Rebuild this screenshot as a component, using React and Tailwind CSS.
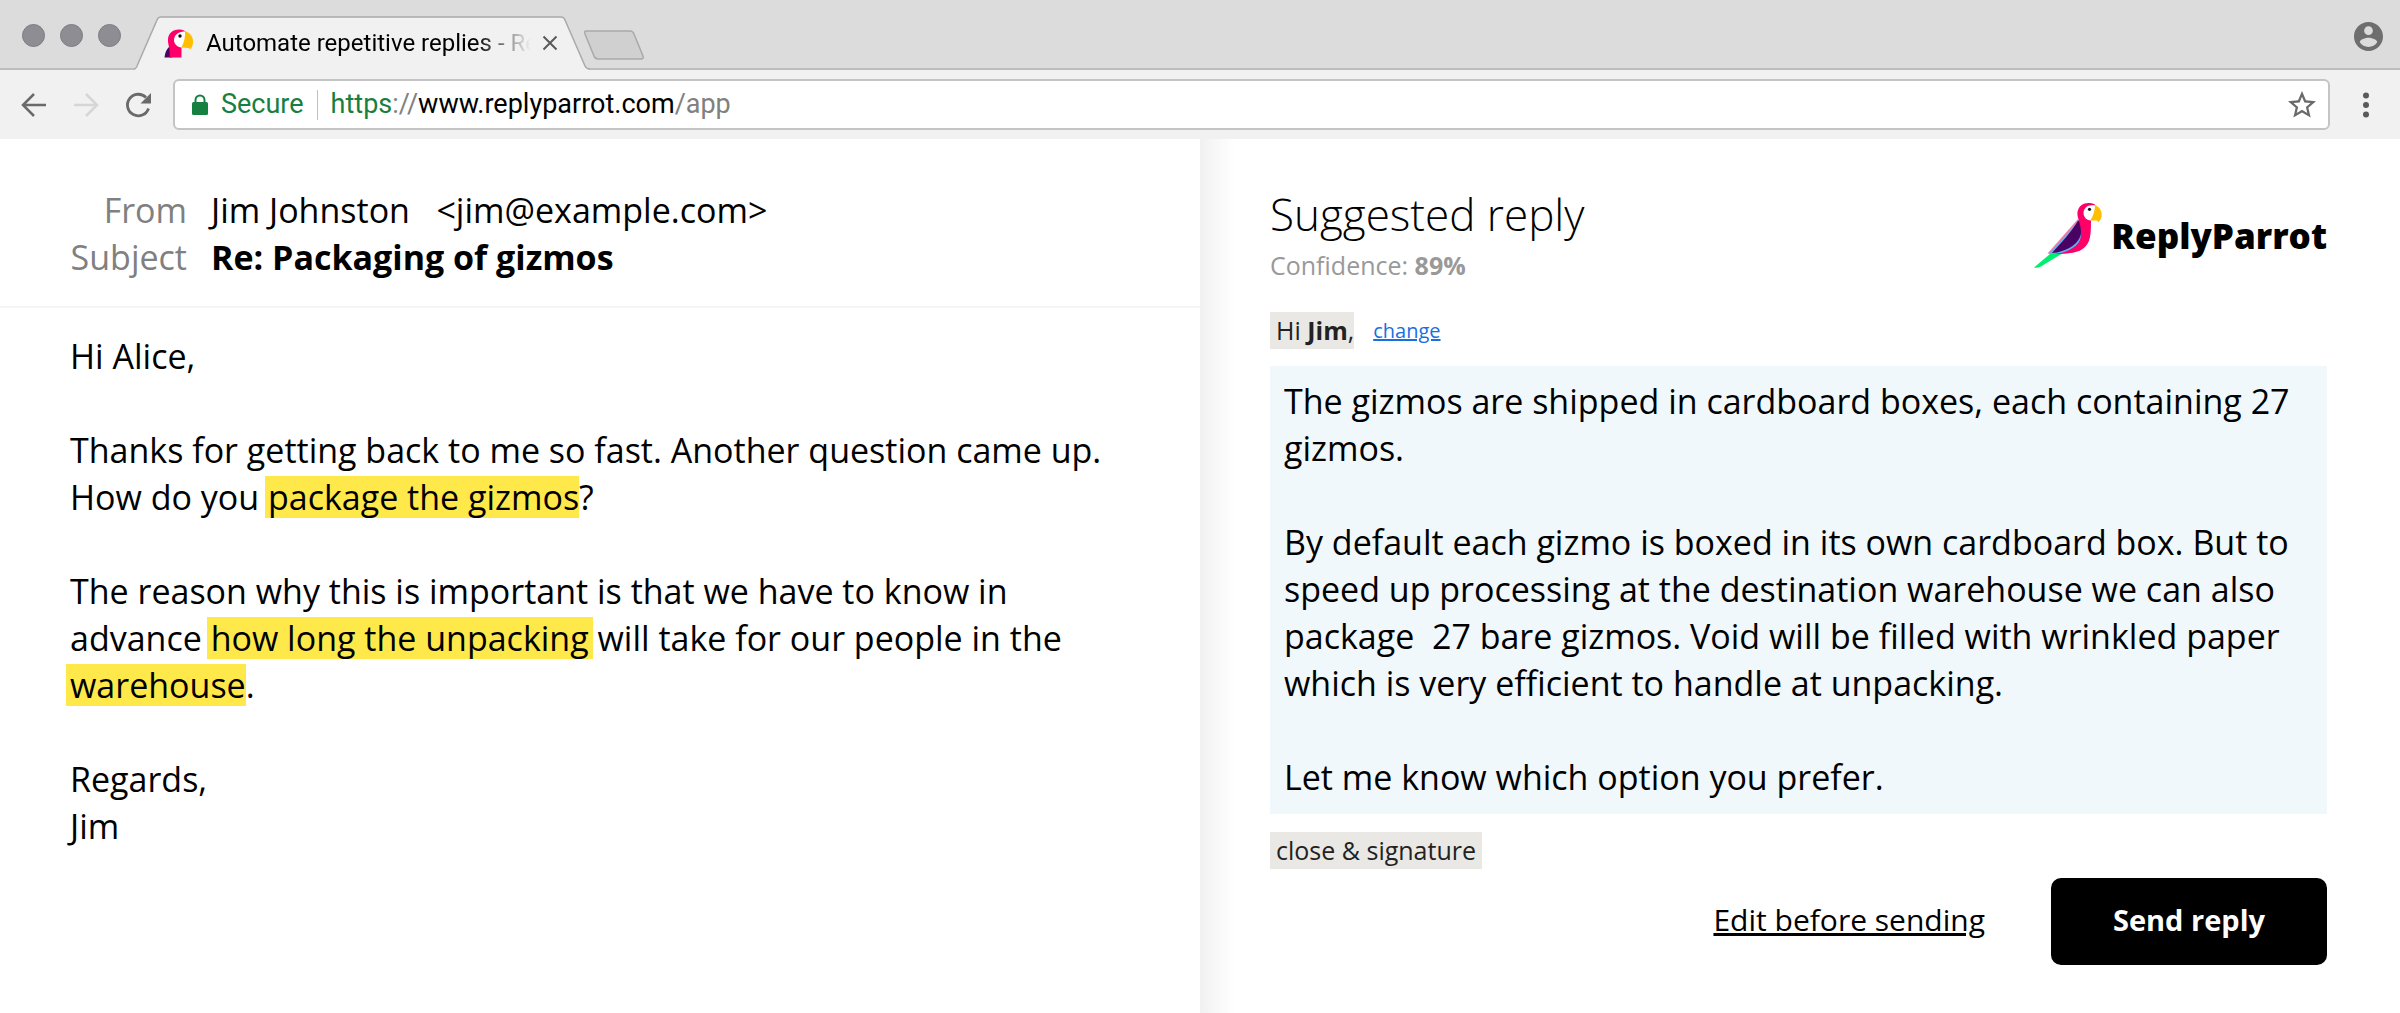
function ParrotHead() {
  return (
    <svg viewBox="0 0 30 30" className="size-[30px] shrink-0" aria-hidden="true">
      <path d="M5 19 C2 22 1 25 0.500 29.500 L8 29.500 L8 20 Z" fill="#4b0064" />
      <path d="M21 3 C12 -1 4.500 4 4 11 C3.500 17 6.500 19 5.500 29.500 L17.500 29.500 L17.500 17 Z" fill="#ff0069" />
      <path d="M21 3.500 C15 3 10 7 10 12 C10 16 13 19 17.500 19.500 L22 12 Z" fill="#fff" />
      <path d="M21 3 C26 4.500 29.500 9 29 14 C29 16.500 28 19.500 26.500 21 L24 20 L17.500 19.500 C20 14 21.500 9 21 3 Z" fill="#ffbf00" />
      <circle cx="16" cy="8" r="1.700" fill="#111" />
    </svg>
  );
}

function Parrot() {
  return (
    <svg viewBox="0 0 80 75" className="h-[75px] w-20 shrink-0" aria-hidden="true">
      <path d="M21 56 L5 69.500 C8 70.500 12 69 16 66 L34 55 Z" fill="#00ee70" />
      <path d="M49 21 L18.500 55.500 L24 56 L50 30 Z" fill="#f07aa8" />
      <path d="M66 6.500 C58 3 50 6 48.500 14 C48 19 50 21 50 24 C50 32 40 46 25 56 C40 56 50 55 56 49 C61 44 62 38 62 23 Z" fill="#ff0069" />
      <path d="M20 56 L49 24 C53 33 54 41 47 47.500 C40 53.500 32 56 20 56 Z" fill="#55b4f5" />
      <path d="M23 55 C30 47 42 35 49.500 22 C52 29 53 35 51 39 C47 48 36 54 23 55 Z" fill="#4b0064" />
      <path d="M66 7.500 C59 6 54.500 10 54.500 15 C54.500 19.500 58 22.500 62 22.500 L66 14 Z" fill="#fff" />
      <path d="M66 7 C71 9 73.500 14 72.500 18.500 C72 21 71 23 69.500 24 L67.500 22.500 L61.500 22.500 C64.500 17 66 12 66 7 Z" fill="#ffbf00" />
      <circle cx="60.500" cy="11.300" r="1.600" fill="#111" />
    </svg>
  );
}

function TabStrip() {
  return (
    <header className="flex h-[70px] items-end border-b-2 border-[#bdbdbd] bg-[#dcdcdc]">
      <div className="flex h-full items-center gap-[15px] pt-[3px] pl-[22px]">
        <span className="size-[23px] rounded-full border border-[#7d7d82] bg-[#8e8d93]" />
        <span className="size-[23px] rounded-full border border-[#7d7d82] bg-[#8e8d93]" />
        <span className="size-[23px] rounded-full border border-[#7d7d82] bg-[#8e8d93]" />
      </div>
      <div className="relative -mb-[2px] ml-[13px] h-[54px] w-[456px]">
        <svg viewBox="0 0 456 54" className="absolute inset-0 size-full" aria-hidden="true">
          <path d="M0 54 C2 53 2 52 3 50 L23 4 Q24 1 27 1 L427 1 Q430 1 431 4 L451 50 C452 52 453 53 456 54 Z" fill="#f1f1f1" />
          <path d="M0 53 C2 53 2 52 3 50 L23 4 Q24 1 27 1 L427 1 Q430 1 431 4 L451 50 C452 52 453 53 456 53" fill="none" stroke="#a9a9a9" strokeWidth="1.500" />
        </svg>
        <div className="relative flex h-full items-center pr-[28px] pl-[30px]">
          <ParrotHead />
          <div className="ml-3 flex-1 overflow-hidden font-[Roboto,sans-serif] text-[24px] whitespace-nowrap text-black [mask-image:linear-gradient(to_right,black_82%,transparent_99%)]">
            Automate repetitive replies - ReplyParrot
          </div>
          <button type="button" aria-label="Close tab" className="ml-1 flex size-6 items-center justify-center">
            <svg viewBox="0 0 24 24" className="size-6" aria-hidden="true">
              <path d="M5.500 5.500 L18.500 18.500 M18.500 5.500 L5.500 18.500" stroke="#5a5a5a" strokeWidth="2" fill="none" />
            </svg>
          </button>
        </div>
      </div>
      <button type="button" aria-label="New tab" className="mb-[7px] -ml-2">
        <svg viewBox="0 0 64 32" className="h-8 w-16" aria-hidden="true">
          <path d="M4 2 L48 2 Q51 2 52 5 L61 27 Q62 30 59 30 L16 30 Q13 30 12 27 L3 5 Q2 2 4 2 Z" fill="#d0d0d0" stroke="#a9a9a9" strokeWidth="1.500" />
        </svg>
      </button>
      <button type="button" aria-label="Profile" className="mr-[17px] mb-[17px] ml-auto">
        <svg viewBox="2 2 20 20" className="size-[29px]" aria-hidden="true">
          <path fill="#6e6e6e" d="M12 2C6.480 2 2 6.480 2 12s4.480 10 10 10 10-4.480 10-10S17.520 2 12 2zm0 3c1.660 0 3 1.340 3 3s-1.340 3-3 3-3-1.340-3-3 1.340-3 3-3zm0 14.200c-2.500 0-4.710-1.280-6-3.220.030-1.990 4-3.080 6-3.080 1.990 0 5.970 1.090 6 3.080-1.290 1.940-3.500 3.220-6 3.220z" />
        </svg>
      </button>
    </header>
  );
}

function Toolbar() {
  return (
    <nav className="flex h-[69px] items-center bg-[#f1f1f1] pr-[22px] pl-5 font-[Roboto,sans-serif]">
      <button type="button" aria-label="Back">
        <svg viewBox="0 0 28 28" className="size-7" aria-hidden="true">
          <path d="M26 14 H4 M14 3 L3 14 L14 25" fill="none" stroke="#6a6a6a" strokeWidth="2.500" />
        </svg>
      </button>
      <button type="button" aria-label="Forward" className="ml-6">
        <svg viewBox="0 0 28 28" className="size-7" aria-hidden="true">
          <path d="M2 14 H24 M14 3 L25 14 L14 25" fill="none" stroke="#d6d6d6" strokeWidth="2.500" />
        </svg>
      </button>
      <button type="button" aria-label="Reload" className="ml-6">
        <svg viewBox="0 0 28 28" className="size-7" aria-hidden="true">
          <path d="M22 6.500 A10.800 10.800 0 1 0 24.500 17.500" fill="none" stroke="#6a6a6a" strokeWidth="2.800" />
          <path d="M27 2 V12.500 H16.500 Z" fill="#6a6a6a" />
        </svg>
      </button>
      <div className="ml-[21px] flex h-[51px] flex-1 items-center rounded-md border-2 border-[#c4c4c4] bg-white pr-3 pl-4">
        <svg viewBox="0 0 18 22" className="h-[22px] w-[18px]" aria-hidden="true">
          <path d="M4.500 10 V6 A4.500 4.500 0 0 1 13.500 6 V10" fill="none" stroke="#168041" strokeWidth="2" />
          <rect x="1" y="8" width="16" height="13" rx="1.500" fill="#168041" />
        </svg>
        <span className="ml-3 text-[27px] text-[#168041]">Secure</span>
        <span className="mx-[13px] h-[30px] w-px bg-[#c0c0c0]" />
        <div className="flex-1 text-[27px] whitespace-nowrap text-[#808080]">
          <span className="text-[#168041]">https</span>://<span className="text-black">www.replyparrot.com</span>/app
        </div>
        <button type="button" aria-label="Bookmark this page">
          <svg viewBox="2 2 20 20" className="size-7" aria-hidden="true">
            <path fill="#6a6a6a" d="M22 9.240l-7.190-.62L12 2 9.190 8.630 2 9.240l5.460 4.730L5.820 21 12 17.270 18.180 21l-1.630-7.030L22 9.240zM12 15.400l-3.760 2.270 1-4.280-3.320-2.880 4.380-.38L12 6.100l1.710 4.040 4.380.38-3.320 2.880 1 4.280L12 15.400z" />
          </svg>
        </button>
      </div>
      <button type="button" aria-label="Menu" className="ml-6">
        <svg viewBox="0 0 24 28" className="h-7 w-6" aria-hidden="true">
          <circle cx="12" cy="4.500" r="3" fill="#5a5a5a" />
          <circle cx="12" cy="14" r="3" fill="#5a5a5a" />
          <circle cx="12" cy="23.500" r="3" fill="#5a5a5a" />
        </svg>
      </button>
    </nav>
  );
}

function Mark({ children, className }) {
  return <mark className={`inline-block bg-[#ffe94a] leading-[42px] text-black ${className}`}>{children}</mark>;
}

function Email() {
  return (
    <section className="text-[34px] leading-[47px]">
      <div className="border-b-2 border-[#f5f5f5] pt-12 pb-[25px] pl-[70px]">
        <dl className="grid grid-cols-[117px_1fr] gap-x-6">
          <dt className="text-right text-[#808080]">From</dt>
          <dd className="whitespace-pre">Jim Johnston   &lt;jim@example.com&gt;</dd>
          <dt className="text-right text-[#808080]">Subject</dt>
          <dd className="font-bold">Re: Packaging of gizmos</dd>
        </dl>
      </div>
      <div className="flex flex-col gap-[47px] pt-[25px] pr-10 pl-[70px]">
        <p>Hi Alice,</p>
        <p>
          Thanks for getting back to me so fast. Another question came up.
          <br />
          How do you <Mark className="-ml-[3px] pl-[3px]">package the gizmos</Mark>?
        </p>
        <p>
          The reason why this is important is that we have to know in
          <br />
          advance <Mark className="-mx-1 px-1">how long the unpacking</Mark> will take for our people in the
          <br />
          <Mark className="-ml-1 pl-1">warehouse</Mark>.
        </p>
        <p>
          Regards,
          <br />
          Jim
        </p>
      </div>
    </section>
  );
}

function Reply() {
  return (
    <section className="bg-[linear-gradient(to_right,#f1f1f1,#fff_35px)] pt-[45px] pr-[73px] pb-12 pl-[70px]">
      <div className="flex items-start justify-between">
        <div>
          <h1 className="text-[44px] leading-[60px] font-light">Suggested reply</h1>
          <p className="text-[25px] leading-[42px] text-[#999]">
            Confidence: <b>89%</b>
          </p>
        </div>
        <div className="mt-[14px] flex items-center gap-[2px]">
          <Parrot />
          <span className="text-[35px] leading-[50px] font-extrabold">ReplyParrot</span>
        </div>
      </div>
      <div className="mt-[26px] flex items-center gap-[19px]">
        <span className="bg-[#e9e8e4] pl-[6px] text-[25px] leading-[37px] text-[#222]">
          Hi <b>Jim</b>,
        </span>
        <a href="#change" className="text-[20px] leading-[37px] text-[#1a6fe0] underline">
          change
        </a>
      </div>
      <div className="mt-[17px] flex flex-col gap-[47px] bg-[#f0f8fc] px-[14px] pt-3 pb-[13px] text-[34px] leading-[47px]">
        <p>
          The gizmos are shipped in cardboard boxes, each containing 27
          <br />
          gizmos.
        </p>
        <p>
          By default each gizmo is boxed in its own cardboard box. But to
          <br />
          speed up processing at the destination warehouse we can also
          <br />
          package &nbsp;27 bare gizmos. Void will be filled with wrinkled paper
          <br />
          which is very efficient to handle at unpacking.
        </p>
        <p>Let me know which option you prefer.</p>
      </div>
      <div className="mt-[18px] flex">
        <button type="button" className="bg-[#e9e8e4] px-[6px] text-[25px] leading-[37px] text-[#222]">
          close &amp; signature
        </button>
      </div>
      <div className="mt-[9px] flex items-center justify-end gap-[66px] leading-[44px]">
        <a href="#edit" className="pb-[3px] text-[30px] underline">
          Edit before sending
        </a>
        <button type="button" className="h-[87px] rounded-[10px] bg-black px-[62px] pb-[3px] text-[29px] font-bold text-white">
          Send reply
        </button>
      </div>
    </section>
  );
}

export default function App() {
  return (
    <div className="flex min-h-screen flex-col bg-white font-['Open_Sans',sans-serif] text-black">
      <TabStrip />
      <Toolbar />
      <main className="grid flex-1 grid-cols-2">
        <Email />
        <Reply />
      </main>
    </div>
  );
}
